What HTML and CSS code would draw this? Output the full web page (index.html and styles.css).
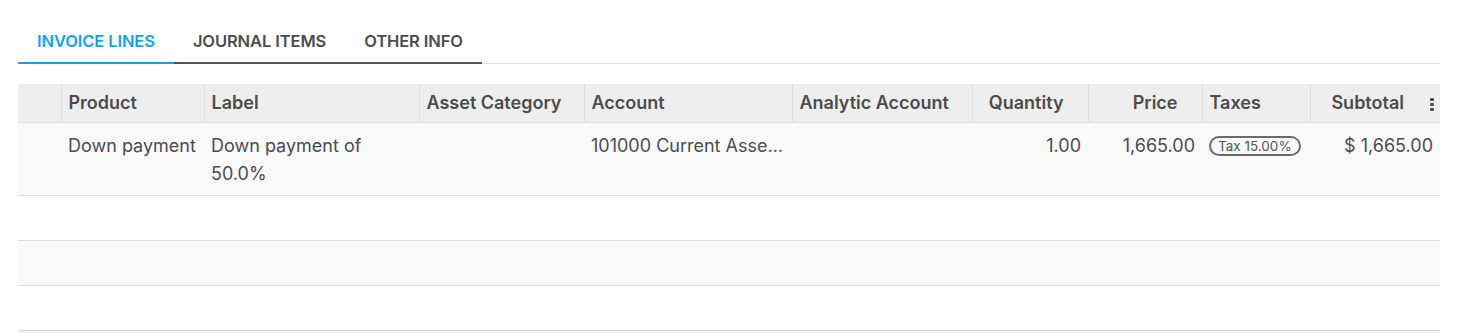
FILE: index.html
```html
<!DOCTYPE html>
<html>
<head>
<meta charset="utf-8">
<link rel="stylesheet" href="styles.css">
</head>
<body>
<div class="page">
  <ul class="tabs">
    <li class="tab active">Invoice Lines</li>
    <li class="tab done">Journal Items</li>
    <li class="tab done">Other Info</li>
  </ul>
  <table class="lines">
    <colgroup>
      <col style="width:43px"><col style="width:143px"><col style="width:215px"><col style="width:165px"><col style="width:208px"><col style="width:180px"><col style="width:116px"><col style="width:114px"><col style="width:108px"><col style="width:130px">
    </colgroup>
    <thead>
      <tr>
        <th></th>
        <th>Product</th>
        <th>Label</th>
        <th>Asset Category</th>
        <th>Account</th>
        <th>Analytic Account</th>
        <th class="num">Quantity</th>
        <th class="num">Price</th>
        <th>Taxes</th>
        <th class="num last">Subtotal<span class="kebab"><i></i><i></i><i></i></span></th>
      </tr>
    </thead>
    <tbody>
      <tr class="odd">
        <td></td>
        <td class="nowrap">Down payment</td>
        <td>Down payment of 50.0%</td>
        <td></td>
        <td class="ellip">101000 Current Asse…</td>
        <td></td>
        <td class="num">1.00</td>
        <td class="num">1,665.00</td>
        <td><span class="badge">Tax 15.00%</span></td>
        <td class="num">$ 1,665.00</td>
      </tr>
      <tr class="empty"><td colspan="10"></td></tr>
      <tr class="empty odd"><td colspan="10"></td></tr>
      <tr class="empty"><td colspan="10"></td></tr>
    </tbody>
    <tfoot>
      <tr><td colspan="10"></td></tr>
    </tfoot>
  </table>
</div>
</body>
</html>
```
FILE: styles.css
```css
html, body {
  margin: 0;
  padding: 0;
  background: #fff;
}
body {
  font-family: Inter, Roboto, sans-serif;
  color: #4c4c4c;
  font-size: 18px;
}
.page {
  padding: 20px 0 0 18px;
  width: 1422px;
}
.tabs {
  list-style: none;
  margin: 0;
  padding: 0;
  display: flex;
  border-bottom: 1px solid #dee2e6;
}
.tab {
  font-weight: 600;
  text-transform: uppercase;
  font-size: 16.5px;
  letter-spacing: -0.1px;
  line-height: 24px;
  padding: 9px 19px 9px 19px;
  margin-bottom: -1px;
  color: #4c4c4c;
  border-bottom: 2px solid transparent;
}
.tab.active {
  color: #0fa3f0;
  border-bottom-color: #0fa3f0;
}
.tab.done {
  border-bottom-color: #565656;
}
.lines {
  margin-top: 20px;
  width: 1422px;
  table-layout: fixed;
  border-collapse: collapse;
}
.lines th {
  background: #eeeeee;
  font-weight: 600;
  text-align: left;
  padding: 7px 7px;
  line-height: 24px;
  border-left: 1px solid #dedede;
  border-bottom: 1px solid #dedede;
  color: #4c4c4c;
  white-space: nowrap;
  overflow: hidden;
}
.lines th:first-child {
  border-left: none;
}
.lines th.num {
  text-align: right;
  padding-right: 24px;
}
.lines th.last {
  position: relative;
  padding-right: 36px;
}
.kebab {
  position: absolute;
  right: 6px;
  top: 14px;
  display: flex;
  flex-direction: column;
  gap: 2px;
}
.kebab i {
  display: block;
  width: 4px;
  height: 3px;
  background: #4c4c4c;
  border-radius: 1px;
}
.lines td {
  padding: 9px 7px 7px;
  line-height: 28px;
  vertical-align: top;
  border-bottom: 1px solid #dcdcdc;
  color: #4c4c4c;
}
.lines tbody tr.odd td {
  background: #f9f9f9;
}
.lines td.num {
  text-align: right;
}
.lines td.nowrap {
  white-space: nowrap;
}
.lines td.ellip {
  white-space: nowrap;
  overflow: hidden;
}
.lines tr.empty td {
  height: 28px;
}
.badge {
  display: inline-block;
  border: 2px solid #6a6a6a;
  border-radius: 10px;
  font-size: 13.5px;
  line-height: 16px;
  padding: 0 7px;
  color: #555;
  vertical-align: 1px;
}
.lines tfoot td {
  background: #eeeeee;
  border-top: 1px solid #dcdcdc;
  border-bottom: none;
  height: 2px;
  padding: 0;
}
```
